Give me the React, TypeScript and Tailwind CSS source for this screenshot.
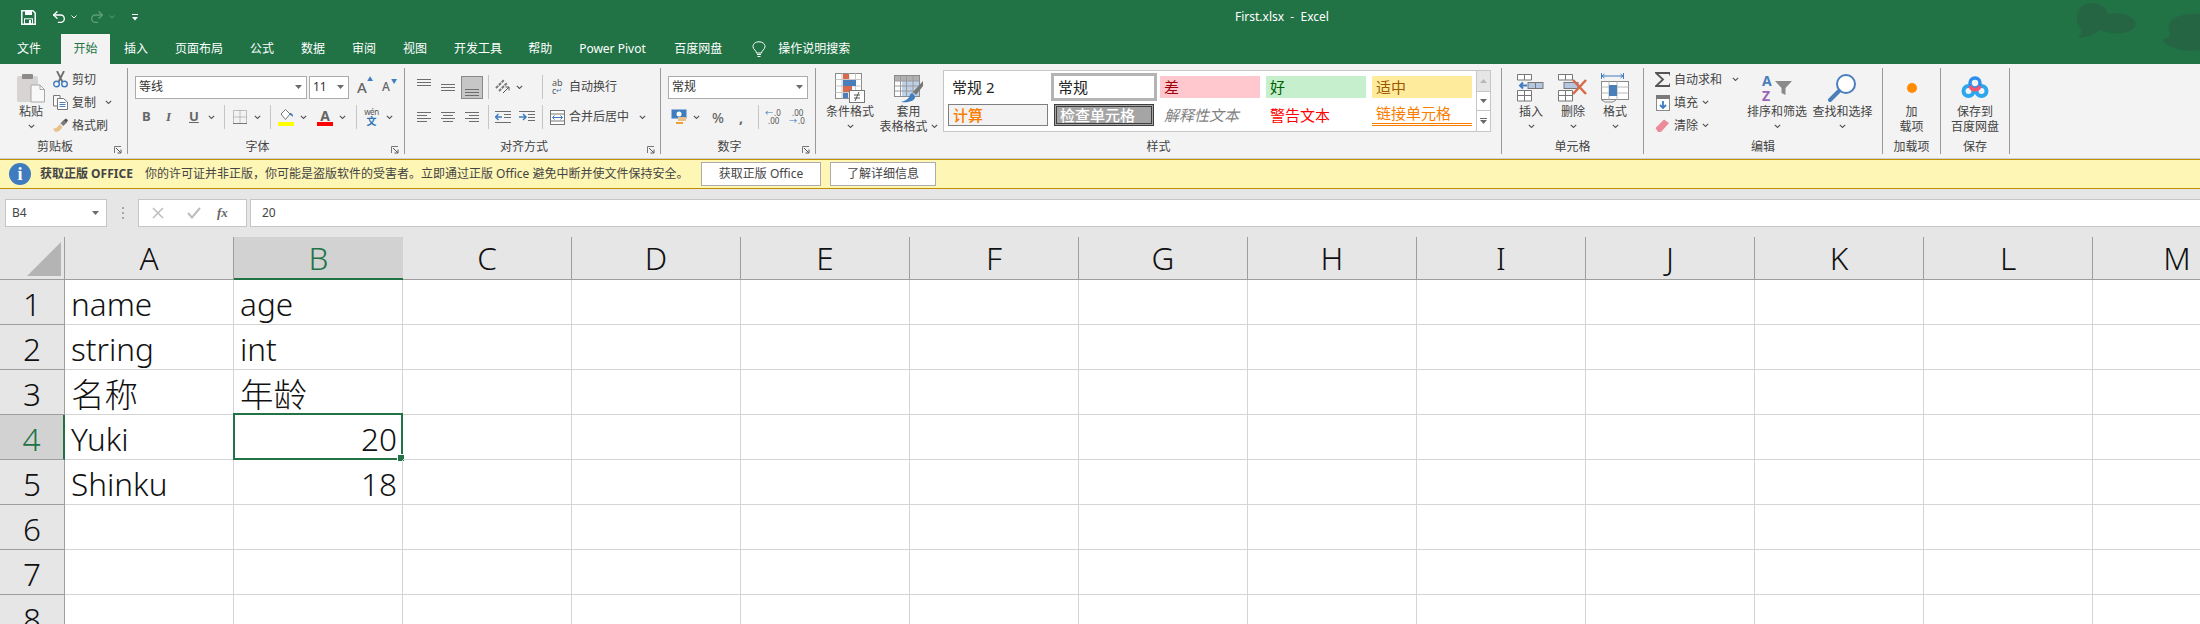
import React from "react";
import { Undo2, Redo2 } from "lucide-react";

const Chev = ({ className = "" }: { className?: string }) => (
  <svg width="7" height="5" viewBox="0 0 7 5" className={"shrink-0 " + className}>
    <path d="M0.8 0.8L3.5 3.5L6.2 0.8" stroke="#555" strokeWidth="1.1" fill="none" />
  </svg>
);
const Tri = ({ className = "" }: { className?: string }) => (
  <svg width="7" height="4" viewBox="0 0 7 4" className={"shrink-0 " + className}>
    <path d="M0 0H7L3.5 4Z" fill="#6a6a6a" />
  </svg>
);
const Sep = ({ className = "" }: { className?: string }) => <div className={"w-px h-[24px] bg-[#c6c6c6] shrink-0 " + className} />;

const Lines = ({ d, className = "" }: { d: string; className?: string }) => (
  <svg width="14" height="20" viewBox="0 0 14 20" className={"shrink-0 " + className}>
    <path d={d} stroke="#6d6d6d" strokeWidth="1" fill="none" />
  </svg>
);

const Launcher = () => (
  <svg width="8" height="8" viewBox="0 0 8 8" className="shrink-0">
    <path d="M0.5 7V0.5H7" stroke="#777" fill="none" />
    <path d="M2 2L6.5 6.5M7 3.5V7H3.5" stroke="#555" fill="none" />
  </svg>
);

function Group({ w, label, launcher, children }: { w: string; label: string; launcher?: boolean; children: React.ReactNode }) {
  return (
    <div className={"h-[86px] flex flex-col shrink-0 border-r border-[#9a9a9a] " + w}>
      <div className="h-[70px] flex">{children}</div>
      <div className="h-[16px] flex items-end">
        <div className="flex-1 text-center leading-[15px] text-[12px] text-[#444]">{label}</div>
        {launcher && <div className="w-[17px] h-[8px] pl-[4px] flex"><Launcher /></div>}
      </div>
    </div>
  );
}

function Large({ w, icon, lines, chev = true }: { w: string; icon: React.ReactNode; lines: React.ReactNode[]; chev?: boolean }) {
  return (
    <div className={"flex flex-col items-center shrink-0 pt-[4px] text-[12px] leading-[15px] text-[#444] " + w}>
      <div className="h-[32px] flex items-center justify-center">{icon}</div>
      {lines.map((l, i) => (
        <div key={i} className="h-[15px] whitespace-nowrap flex items-center">{l}</div>
      ))}
      {chev && <div className="h-[15px] flex items-center"><Chev /></div>}
    </div>
  );
}

const PasteIcon = () => (
  <svg width="28" height="30" viewBox="0 0 28 30">
    <rect x="0" y="3" width="21" height="26" rx="2" fill="#d8d4d4" />
    <rect x="5" y="1" width="11" height="5" rx="1" fill="#8e8a8a" />
    <path d="M14 12H23L27.500 16.500V29H14Z" fill="#f8f8f8" stroke="#a8a8a8" />
    <path d="M23 12V16.500H27.500" fill="none" stroke="#a8a8a8" />
  </svg>
);
const CutIcon = () => (
  <svg width="15" height="17" viewBox="0 0 15 17">
    <path d="M4 0L9.500 11M11 0L5.500 11" stroke="#6d6d6d" strokeWidth="1.800" />
    <circle cx="3.500" cy="13" r="2.800" fill="none" stroke="#3f7cc0" strokeWidth="1.400" />
    <circle cx="11.500" cy="13" r="2.800" fill="none" stroke="#3f7cc0" strokeWidth="1.400" />
  </svg>
);
const CopyIcon = () => (
  <svg width="15" height="15" viewBox="0 0 15 15">
    <path d="M0.500 0.500H7V3M0.500 0.500V11H4" fill="#fff" stroke="#777" />
    <path d="M4.500 3.500H10.500L14.500 7V14.500H4.500Z" fill="#fff" stroke="#777" />
    <path d="M6.500 7.500H12.500M6.500 9.500H12.500M6.500 11.500H12.500" stroke="#4a7ebb" />
  </svg>
);
const BrushIcon = () => (
  <svg width="16" height="15" viewBox="0 0 16 15">
    <path d="M0 11C4 11 6 8 7 6L10 9C9 12 5 15 2 14Z" fill="#e8c08a" />
    <path d="M8 5L11 2L14 5L11 8Z" fill="#7a7a7a" />
    <path d="M11 2L14 0L16 2L14 5Z" fill="#555" />
  </svg>
);
const BorderIcon = () => (
  <svg width="14" height="14" viewBox="0 0 14 14">
    <path d="M0.500 0.500H13.500V13.500H0.500ZM7 0.500V13.500M0.500 7H13.500" stroke="#8a8a8a" strokeDasharray="1 1" fill="none" />
    <path d="M0 13.500H14" stroke="#777" />
  </svg>
);
const FillIcon = () => (
  <div className="w-[16px] flex flex-col items-center shrink-0">
    <svg width="16" height="13" viewBox="0 0 16 13">
      <path d="M3 5L7.500 0.500L12 5L7.500 10.500Z" fill="#fff" stroke="#777" />
      <path d="M12 4C14 4 15.500 6 15 8C14 7 13 6 12 6Z" fill="#3f7cc0" />
    </svg>
    <div className="w-[16px] h-[4px] bg-[#ffff00]" />
  </div>
);
const FontColorIcon = () => (
  <div className="w-[16px] flex flex-col items-center shrink-0">
    <span className="text-[14px] leading-[13px] h-[13px] font-bold text-[#666]">A</span>
    <div className="w-[16px] h-[4px] bg-[#ff0000]" />
  </div>
);
const WenIcon = () => (
  <div className="w-[15px] flex flex-col items-center shrink-0 leading-none">
    <span className="text-[8px] leading-[9px] text-[#555] tracking-tighter">wén</span>
    <span className="text-[10px] leading-[11px] text-[#2f75b5] font-bold">文</span>
  </div>
);
const OrientIcon = () => (
  <div className="w-[16px] h-[16px] flex items-center justify-center shrink-0">
    <svg width="16" height="16" viewBox="0 0 16 16">
      <path d="M1 9L9 1M4 12L12 4" stroke="#777" strokeWidth="2" strokeDasharray="3 1" />
      <path d="M8 14L14 8M14 8V11.500M14 8H10.500" stroke="#555" fill="none" />
    </svg>
  </div>
);
const IndentIcon = ({ flip }: { flip?: boolean }) => (
  <svg width="16" height="12" viewBox="0 0 16 12" className="shrink-0">
    {flip ? (
      <>
        <path d="M0 6H7M4 3L7 6L4 9" stroke="#3f7cc0" strokeWidth="1.500" fill="none" />
        <path d="M0 0.500H16M9 3.500H16M9 6.500H16M9 9.500H16" stroke="#6d6d6d" />
      </>
    ) : (
      <>
        <path d="M7 6H0.500M3.500 3L0.500 6L3.500 9" stroke="#3f7cc0" strokeWidth="1.500" fill="none" />
        <path d="M0 0.500H16M9 3.500H16M9 6.500H16M0 11.500H16" stroke="#6d6d6d" />
      </>
    )}
  </svg>
);
const WrapIcon = () => (
  <div className="w-[11px] flex flex-col shrink-0 leading-[8px] text-[9px] text-[#555]">
    <span>ab</span>
    <span className="flex items-center">c<span className="text-[#3f7cc0] text-[7px]">↵</span></span>
  </div>
);
const MergeIcon = () => (
  <svg width="15" height="15" viewBox="0 0 15 15" className="shrink-0">
    <rect x="0.500" y="0.500" width="14" height="14" fill="#fff" stroke="#777" />
    <path d="M0.500 4H14.500M0.500 11H14.500" stroke="#777" />
    <path d="M2.500 7.500H12.500M4.500 5.500L2.500 7.500L4.500 9.500M10.500 5.500L12.500 7.500L10.500 9.500" stroke="#3f7cc0" fill="none" />
  </svg>
);
const CurrencyIcon = () => (
  <svg width="17" height="16" viewBox="0 0 17 16" className="shrink-0">
    <rect x="0.500" y="0.500" width="15" height="9" fill="#3f7cc0" />
    <circle cx="8" cy="5" r="2.500" fill="#fff" />
    <path d="M7 9H15M7 11H15" stroke="#e8c08a" strokeWidth="2" />
    <path d="M5 14H12" stroke="#f0a030" strokeWidth="2" />
  </svg>
);
const DecIcon = ({ more }: { more?: boolean }) => (
  <div className="w-[14px] shrink-0 flex flex-col text-[8px] leading-[8px] text-[#555]">
    {more ? (
      <>
        <span className="flex items-center"><span className="text-[#3f7cc0] mr-px">←</span>.0</span>
        <span className="pl-[3px]">.00</span>
      </>
    ) : (
      <>
        <span className="pl-[3px]">.00</span>
        <span className="flex items-center"><span className="text-[#3f7cc0] mr-px">→</span>.0</span>
      </>
    )}
  </div>
);
const CondIcon = () => (
  <svg width="30" height="30" viewBox="0 0 30 30">
    <rect x="0.500" y="0.500" width="26" height="25" fill="#fff" stroke="#8a8a8a" />
    <path d="M7 0.500V25.500M14 0.500V25.500M20.500 0.500V25.500M0.500 6.500H26.500M0.500 13H26.500M0.500 19.500H26.500" stroke="#c8c8c8" />
    <rect x="8" y="1" width="6" height="5" fill="#d9694a" />
    <rect x="8" y="7" width="13" height="6" fill="#4a7ebb" />
    <rect x="8" y="13" width="9" height="6" fill="#d9694a" />
    <rect x="8" y="20" width="5" height="5" fill="#4a7ebb" />
    <rect x="14.500" y="17.500" width="15" height="12" fill="#fff" stroke="#777" />
    <path d="M19 22H25M19 25H25M20 28L24 19" stroke="#555" fill="none" />
  </svg>
);
const TableIcon = () => (
  <svg width="30" height="30" viewBox="0 0 30 30">
    <rect x="0.500" y="2.500" width="25" height="21" fill="#fff" stroke="#8a8a8a" />
    <rect x="1" y="3" width="24" height="5" fill="#b0b0b0" />
    <rect x="8" y="8" width="17" height="15" fill="#bcd0e8" />
    <path d="M6.500 2.500V23.500M12.500 2.500V23.500M19 2.500V23.500M0.500 8H25.500M0.500 13H25.500M0.500 18H25.500" stroke="#9a9a9a" />
    <path d="M29 8L19 19L22 22L29 13Z" fill="#777" />
    <path d="M18 20C14 22 18 26 7 29C14 30 22 28 21 23Z" fill="#3f7cc0" />
  </svg>
);
const InsertIcon = () => (
  <svg width="28" height="28" viewBox="0 0 28 28">
    <path d="M0.500 0.500H14.500V6H0.500ZM7.500 0.500V6M0.500 16.500H14.500V27H0.500ZM7.500 16.500V27M0.500 21.500H14.500" fill="#fff" stroke="#777" />
    <rect x="11" y="8.500" width="15" height="6" fill="#b4c7e0" stroke="#777" />
    <path d="M18.500 8.500V14.500" stroke="#777" />
    <path d="M10 11.500H3M6 8.500L3 11.500L6 14.500" stroke="#3f7cc0" strokeWidth="2" fill="none" />
  </svg>
);
const DeleteIcon = () => (
  <svg width="30" height="28" viewBox="0 0 30 28">
    <path d="M0.500 0.500H14.500V6H0.500ZM7.500 0.500V6M0.500 16.500H14.500V27H0.500ZM7.500 16.500V27M0.500 21.500H14.500" fill="#fff" stroke="#777" />
    <rect x="6" y="8.500" width="14" height="6" fill="#b4c7e0" stroke="#777" />
    <path d="M15 6L28 20M28 6L15 20" stroke="#d9694a" strokeWidth="2.500" />
  </svg>
);
const FormatIcon = () => (
  <svg width="28" height="30" viewBox="0 0 28 30">
    <path d="M1 3H22M1 3L3.500 1M1 3L3.500 5M22 3L19.500 1M22 3L19.500 5M0.500 0V6M22.500 0V6" stroke="#3f7cc0" fill="none" />
    <rect x="0.500" y="8.500" width="27" height="18" fill="#fff" stroke="#8a8a8a" />
    <path d="M8 8.500V26.500M16 8.500V26.500M0.500 14H27.500M0.500 20H27.500" stroke="#b8b8b8" />
    <rect x="8" y="12" width="8" height="11" fill="#4a7ebb" />
    <path d="M0.500 27L4 29H12L15 27" fill="none" stroke="#8a8a8a" />
  </svg>
);
const SumIcon = () => (
  <svg width="15" height="15" viewBox="0 0 15 15" className="shrink-0">
    <path d="M15 3.500V1H1L8 7.500L1 14H15V11.500" fill="none" stroke="#555" strokeWidth="1.800" />
  </svg>
);
const DownFill = () => (
  <svg width="14" height="16" viewBox="0 0 14 16" className="shrink-0">
    <rect x="0.500" y="0.500" width="13" height="15" fill="#fff" stroke="#8a8a8a" />
    <rect x="0" y="0" width="14" height="4" fill="#7a7a7a" />
    <path d="M7 6V13M4 10L7 13L10 10" stroke="#3f7cc0" strokeWidth="1.800" fill="none" />
  </svg>
);
const Eraser = () => (
  <svg width="15" height="14" viewBox="0 0 15 14" className="shrink-0">
    <path d="M0.500 9L9 0.500L14 4L6 13H3Z" fill="#ea8a9a" />
  </svg>
);
const SortIcon = () => (
  <div className="flex items-center w-[30px]">
    <div className="flex flex-col gap-[2px] text-[14px] leading-[13px] font-bold w-[13px]">
      <span className="text-[#4a7ebb]">A</span>
      <span className="text-[#9a62b5]">Z</span>
    </div>
    <svg width="17" height="17" viewBox="0 0 17 17">
      <path d="M0 1H17L10.500 8V15L6.500 13V8Z" fill="#8a8a8a" />
    </svg>
  </div>
);
const SearchIcon = () => (
  <svg width="29" height="30" viewBox="0 0 29 30">
    <circle cx="18" cy="11" r="9" fill="#fff" stroke="#4a7ebb" strokeWidth="2" />
    <path d="M11 18L2 27" stroke="#4a7ebb" strokeWidth="4" strokeLinecap="round" />
  </svg>
);
const CloudIcon = () => (
  <svg width="28" height="24" viewBox="0 0 28 24">
    <circle cx="7.500" cy="15" r="5" fill="none" stroke="#2ba7ef" strokeWidth="4" />
    <circle cx="20.500" cy="15" r="5" fill="none" stroke="#2ba7ef" strokeWidth="4" />
    <circle cx="14" cy="7" r="5" fill="none" stroke="#2b8ff0" strokeWidth="3.500" />
    <path d="M9 10C11 15 17 15 19 10" fill="none" stroke="#f4546f" strokeWidth="3.500" />
  </svg>
);

const rowItem = "h-[23px] flex items-center text-[12px] text-[#444] whitespace-nowrap";
const row30 = "h-[30px] flex items-center text-[12px] text-[#444] whitespace-nowrap";
const selectBox = "h-[23px] bg-white border border-[#ababab] flex items-center shrink-0";

function Ribbon() {
  return (
    <div className="h-[95px] bg-[#f3f3f3] border-b border-[#d0d0d0] pt-[4px] flex">
      <Group w="w-[128px]" label="剪贴板" launcher>
        <div className="ml-[17px] w-[28px] shrink-0">
          <Large w="w-[28px]" icon={<PasteIcon />} lines={["粘贴"]} />
        </div>
        <div className="ml-[8px] flex flex-col w-[70px]">
          <div className={rowItem}><div className="w-[15px] flex justify-center"><CutIcon /></div><span className="ml-[4px]">剪切</span></div>
          <div className={rowItem}><div className="w-[15px] flex justify-center"><CopyIcon /></div><span className="ml-[4px]">复制</span><Chev className="ml-[9px]" /></div>
          <div className={rowItem}><div className="w-[15px] flex justify-center"><BrushIcon /></div><span className="ml-[4px]">格式刷</span></div>
        </div>
      </Group>
      <Group w="w-[277px]" label="字体" launcher>
        <div className="pt-[4px] flex flex-col">
          <div className={row30}>
            <div className={selectBox + " ml-[7px] w-[172px] pl-[3px] pr-[4px] justify-between text-[#333]"}>等线<Tri /></div>
            <div className={selectBox + " ml-[2px] w-[40px] pl-[3px] pr-[4px] justify-between text-[#333]"}>11<Tri /></div>
            <div className="ml-[8px] w-[13px] text-[15px] font-medium text-[#666] relative">A<span className="absolute right-[-3px] top-0 text-[6px] leading-none text-[#3f7cc0]">▲</span></div>
            <div className="ml-[12px] w-[12px] text-[12px] font-medium text-[#666] relative">A<span className="absolute right-[-3px] top-0 text-[6px] leading-none text-[#3f7cc0]">▼</span></div>
          </div>
          <div className={row30}>
            <span className="ml-[14px] w-[8px] font-bold text-[13px] text-[#666]">B</span>
            <span className="ml-[16px] w-[8px] italic text-[13px] text-[#666] font-['Liberation_Serif',serif] font-bold">I</span>
            <span className="ml-[15px] w-[9px] underline font-bold text-[13px] text-[#666]">U</span>
            <Chev className="ml-[10px]" />
            <Sep className="ml-[9px]" />
            <div className="ml-[8px]"><BorderIcon /></div>
            <Chev className="ml-[7px]" />
            <Sep className="ml-[9px]" />
            <div className="ml-[7px]"><FillIcon /></div>
            <Chev className="ml-[6px]" />
            <div className="ml-[10px]"><FontColorIcon /></div>
            <Chev className="ml-[6px]" />
            <Sep className="ml-[10px]" />
            <div className="ml-[7px]"><WenIcon /></div>
            <Chev className="ml-[7px]" />
          </div>
        </div>
      </Group>
      <Group w="w-[256px]" label="对齐方式" launcher>
        <div className="pt-[4px] flex flex-col">
          <div className={row30}>
            <Lines className="ml-[12px]" d="M0 2.500H14M0 5.500H14M0 8.500H14" />
            <Lines className="ml-[10px]" d="M0 7.500H14M0 10.500H14M0 13.500H14" />
            <div className="ml-[6px] w-[22px] h-[23px] bg-[#c6c6c6] border border-[#8a8a8a] flex items-center justify-center shrink-0">
              <Lines d="M0 12.500H14M0 15.500H14M0 18.500H14" />
            </div>
            <Sep className="ml-[5px]" />
            <div className="ml-[6px]"><OrientIcon /></div>
            <Chev className="ml-[5px]" />
            <Sep className="ml-[19px]" />
            <div className="ml-[9px]"><WrapIcon /></div>
            <span className="ml-[6px]">自动换行</span>
          </div>
          <div className={row30}>
            <Lines className="ml-[12px]" d="M0 5.500H14M0 8.500H10M0 11.500H14M0 14.500H10" />
            <Lines className="ml-[10px]" d="M0 5.500H14M2 8.500H12M0 11.500H14M2 14.500H12" />
            <Lines className="ml-[10px]" d="M0 5.500H14M4 8.500H14M0 11.500H14M4 14.500H14" />
            <Sep className="ml-[9px]" />
            <div className="ml-[6px]"><IndentIcon /></div>
            <div className="ml-[8px]"><IndentIcon flip /></div>
            <Sep className="ml-[7px]" />
            <div className="ml-[7px]"><MergeIcon /></div>
            <span className="ml-[4px]">合并后居中</span>
            <Chev className="ml-[10px]" />
          </div>
        </div>
      </Group>
      <Group w="w-[155px]" label="数字" launcher>
        <div className="pt-[4px] flex flex-col">
          <div className={row30}>
            <div className={selectBox + " ml-[7px] w-[140px] pl-[3px] pr-[4px] justify-between text-[#333]"}>常规<Tri /></div>
          </div>
          <div className={row30}>
            <div className="ml-[10px]"><CurrencyIcon /></div>
            <Chev className="ml-[5px]" />
            <span className="ml-[12px] w-[13px] text-[14px] text-[#666] font-medium">%</span>
            <span className="ml-[14px] w-[5px] text-[14px] font-bold text-[#666]">,</span>
            <Sep className="ml-[14px]" />
            <div className="ml-[6px]"><DecIcon more /></div>
            <div className="ml-[10px]"><DecIcon /></div>
          </div>
        </div>
      </Group>
      <Group w="w-[686px]" label="样式">
        <div className="ml-[10px]"><Large w="w-[48px]" icon={<CondIcon />} lines={["条件格式"]} /></div>
        <div className="ml-[5px]">
          <Large w="w-[59px]" chev={false} icon={<TableIcon />} lines={["套用", <span className="flex items-center">表格格式<Chev className="ml-[3px]" /></span>]} />
        </div>
        <div className="ml-[5px] mt-[2px] w-[548px] h-[62px] bg-white border border-[#c6c6c6] flex shrink-0">
          <div className="flex-1 grid grid-cols-[repeat(5,100px)] grid-rows-[22px_22px] gap-x-[6px] gap-y-[6px] pl-[4px] pt-[5px] text-[15px] leading-[22px] whitespace-nowrap">
            <div className="px-[4px] text-[#222]">常规 2</div>
            <div className="px-[4px] text-[#222] outline-3 outline-[#b4b4b4]">常规</div>
            <div className="px-[4px] bg-[#ffc7ce] text-[#9c0006]">差</div>
            <div className="px-[4px] bg-[#c6efce] text-[#006100]">好</div>
            <div className="px-[4px] bg-[#ffeb9c] text-[#9c5700]">适中</div>
            <div className="px-[4px] bg-[#f2f2f2] border border-[#7f7f7f] text-[#fa7d00] font-medium leading-[20px]">计算</div>
            <div className="px-[3px] bg-[#a5a5a5] border-[3px] border-double border-[#3f3f3f] text-white font-medium leading-[16px]">检查单元格</div>
            <div className="px-[4px] italic text-[#7f7f7f]">解释性文本</div>
            <div className="px-[4px] text-[#ff0000]">警告文本</div>
            <div className="px-[4px] text-[#fa7d00] border-b-[3px] border-double border-[#fa7d00] leading-[19px]">链接单元格</div>
          </div>
          <div className="w-[14px] border-l border-[#c6c6c6] flex flex-col">
            <div className="h-[21px] bg-[#e6e6e6] border-b border-[#c6c6c6] flex items-center justify-center"><svg width="7" height="4" viewBox="0 0 7 4"><path d="M0 4H7L3.500 0Z" fill="#b8b8b8" /></svg></div>
            <div className="h-[19px] border-b border-[#c6c6c6] flex items-center justify-center"><Tri /></div>
            <div className="flex-1 flex flex-col items-center justify-center gap-[1px]"><div className="w-[7px] h-px bg-[#6a6a6a]" /><Tri /></div>
          </div>
        </div>
      </Group>
      <Group w="w-[142px]" label="单元格">
        <div className="ml-[8px]"><Large w="w-[42px]" icon={<InsertIcon />} lines={["插入"]} /></div>
        <Large w="w-[42px]" icon={<DeleteIcon />} lines={["删除"]} />
        <Large w="w-[42px]" icon={<FormatIcon />} lines={["格式"]} />
      </Group>
      <Group w="w-[239px]" label="编辑">
        <div className="ml-[11px] w-[92px] flex flex-col shrink-0">
          <div className={rowItem}><div className="w-[15px] flex justify-center"><SumIcon /></div><span className="ml-[4px]">自动求和</span><Chev className="ml-[10px]" /></div>
          <div className={rowItem}><div className="w-[15px] flex justify-center"><DownFill /></div><span className="ml-[4px]">填充</span><Chev className="ml-[4px]" /></div>
          <div className={rowItem}><div className="w-[15px] flex justify-center"><Eraser /></div><span className="ml-[4px]">清除</span><Chev className="ml-[4px]" /></div>
        </div>
        <Large w="w-[60px]" icon={<SortIcon />} lines={["排序和筛选"]} />
        <div className="ml-[5px]"><Large w="w-[61px]" icon={<SearchIcon />} lines={["查找和选择"]} /></div>
      </Group>
      <Group w="w-[58px]" label="加载项">
        <Large w="w-[57px]" chev={false} icon={<div className="w-[10px] h-[10px] rounded-full bg-[#ff8c00] blur-[0.5px]" />} lines={["加", "载项"]} />
      </Group>
      <Group w="w-[69px]" label="保存">
        <Large w="w-[68px]" chev={false} icon={<CloudIcon />} lines={["保存到", "百度网盘"]} />
      </Group>
    </div>
  );
}

function TitleBar() {
  return (
    <div className="bg-[#217346] h-[64px] text-white relative overflow-hidden">
      <svg width="130" height="64" viewBox="0 0 130 64" className="absolute right-0 top-0">
        <path d="M9 10C14 0 34 0 38 14C48 12 64 14 66 24C64 34 44 36 30 30C22 36 14 38 8 38C12 34 12 32 10 28C6 22 6 16 9 10Z" fill="#266543" />
        <path d="M100 22C108 12 130 14 130 14V50C118 52 100 50 92 40C98 38 100 36 100 34C98 30 98 26 100 22Z" fill="#266543" />
      </svg>
      <div className="h-[34px] flex items-center">
        <svg width="15" height="15" viewBox="0 0 15 15" className="ml-[21px] shrink-0">
          <path d="M0.800 0.800H12L14.200 3V14.200H0.800Z" fill="none" stroke="#fff" strokeWidth="1.500" />
          <rect x="4" y="1" width="7" height="4" fill="#fff" />
          <rect x="3.500" y="8.800" width="8" height="5" fill="none" stroke="#fff" />
          <rect x="8" y="10" width="2" height="4" fill="#fff" />
        </svg>
        <Undo2 size={16} strokeWidth={2} color="#fff" className="ml-[15px] shrink-0" />
        <svg width="6" height="4" viewBox="0 0 6 4" className="ml-[4px] shrink-0"><path d="M0.500 0.500L3 3L5.500 0.500" stroke="#fff" fill="none" /></svg>
        <Redo2 size={16} strokeWidth={2} color="#5f9e7c" className="ml-[12px] shrink-0" />
        <svg width="6" height="4" viewBox="0 0 6 4" className="ml-[4px] shrink-0"><path d="M0.500 0.500L3 3L5.500 0.500" stroke="#5f9e7c" fill="none" /></svg>
        <svg width="6" height="7" viewBox="0 0 6 7" className="ml-[17px] shrink-0"><path d="M0 0.500H6" stroke="#fff" /><path d="M0 3H6L3 6.500Z" fill="#fff" /></svg>
        <span className="ml-[1097px] text-[12px] whitespace-pre">First.xlsx  -  Excel</span>
      </div>
      <div className="h-[30px] flex items-center text-[12px] whitespace-nowrap">
        <span className="ml-[17px]">文件</span>
        <div className="ml-[20px] w-[49px] h-[30px] bg-[#f3f3f3] text-[#217346] flex items-center justify-center">开始</div>
        <span className="ml-[14px]">插入</span>
        <span className="ml-[27px]">页面布局</span>
        <span className="ml-[27px]">公式</span>
        <span className="ml-[27px]">数据</span>
        <span className="ml-[27px]">审阅</span>
        <span className="ml-[27px]">视图</span>
        <span className="ml-[27px]">开发工具</span>
        <span className="ml-[26px]">帮助</span>
        <span className="ml-[27px] w-[68px]">Power Pivot</span>
        <span className="ml-[27px]">百度网盘</span>
        <svg width="14" height="17" viewBox="0 0 14 17" className="ml-[30px] shrink-0">
          <path d="M4.500 12C4.500 9.500 1 8.500 1 5.500C1 2.800 3.500 0.800 7 0.800C10.500 0.800 13 2.800 13 5.500C13 8.500 9.500 9.500 9.500 12Z" fill="none" stroke="#fff" />
          <path d="M5 13.500H9M5.500 15.500H8.500" stroke="#fff" />
        </svg>
        <span className="ml-[12px]">操作说明搜索</span>
      </div>
    </div>
  );
}

function Notice() {
  return (
    <div className="h-[30px] bg-[#fdf6b5] border-y border-[#bf8f00] flex items-center text-[12px] text-[#444] whitespace-nowrap">
      <div className="ml-[9px] w-[22px] h-[22px] rounded-full bg-[#3f7cbf] text-white flex items-center justify-center font-['Liberation_Serif',serif] font-bold text-[18px] leading-none shrink-0">i</div>
      <span className="ml-[9px] w-[96px] font-bold">获取正版 OFFICE</span>
      <span className="ml-[9px] w-[556px]">你的许可证并非正版，你可能是盗版软件的受害者。立即通过正版 Office 避免中断并使文件保持安全。</span>
      <button className="w-[120px] h-[24px] bg-white border border-[#ababab] text-[#444] shrink-0">获取正版 Office</button>
      <button className="ml-[9px] w-[106px] h-[24px] bg-white border border-[#ababab] text-[#444] shrink-0">了解详细信息</button>
    </div>
  );
}

function FormulaBar() {
  return (
    <div className="h-[48px] bg-[#e6e6e6] pt-[10px] flex items-start text-[12px] text-[#444]">
      <div className="ml-[5px] w-[102px] h-[28px] bg-white border border-[#c6c6c6] flex items-center justify-between pl-[6px] pr-[7px] shrink-0">B4<Tri /></div>
      <div className="ml-[14px] w-[4px] h-[28px] flex flex-col justify-center items-center gap-[3px] shrink-0">
        <div className="w-[2px] h-[2px] bg-[#a6a6a6]" /><div className="w-[2px] h-[2px] bg-[#a6a6a6]" /><div className="w-[2px] h-[2px] bg-[#a6a6a6]" />
      </div>
      <div className="ml-[13px] w-[109px] h-[28px] bg-white border border-[#c6c6c6] flex items-center shrink-0">
        <svg width="12" height="12" viewBox="0 0 12 12" className="ml-[13px] shrink-0"><path d="M1 1L11 11M11 1L1 11" stroke="#bdbdbd" strokeWidth="1.500" /></svg>
        <svg width="14" height="12" viewBox="0 0 14 12" className="ml-[23px] shrink-0"><path d="M1 6L5 10.500L13 1" stroke="#bdbdbd" strokeWidth="2" fill="none" /></svg>
        <span className="ml-[16px] font-['Liberation_Serif',serif] italic font-bold text-[13px] text-[#666]">fx</span>
      </div>
      <div className="ml-[3px] flex-1 h-[28px] bg-white border border-[#c6c6c6] border-r-0 flex items-center pl-[11px]">20</div>
    </div>
  );
}

const COLS = ["A", "B", "C", "D", "E", "F", "G", "H", "I", "J", "K", "L", "M"];
const RIGHT = "justify-end pr-[5px]";
const DATA: Record<number, Record<string, string>> = {
  1: { A: "name", B: "age" },
  2: { A: "string", B: "int" },
  3: { A: "名称", B: "年龄" },
  4: { A: "Yuki", B: "20" },
  5: { A: "Shinku", B: "18" },
};

function Sheet() {
  return (
    <div className="text-[31.5px] text-[#111] font-light">
      <div className="flex h-[43px]">
        <div className="w-[65px] shrink-0 bg-[#e6e6e6] border-r border-b border-[#9e9e9e] flex items-end justify-end pr-[3px] pb-[3px]">
          <svg width="34" height="34" viewBox="0 0 34 34"><path d="M34 0V34H0Z" fill="#b4b4b4" /></svg>
        </div>
        {COLS.map((c) =>
          c === "B" ? (
            <div key={c} className="w-[169px] shrink-0 bg-[#d2d2d2] border-b-2 border-[#217346] text-[#217346] flex items-center justify-center leading-[42px]">{c}</div>
          ) : (
            <div key={c} className="w-[169px] shrink-0 bg-[#e6e6e6] border-r border-b border-[#9e9e9e] flex items-center justify-center leading-[42px]">{c}</div>
          )
        )}
      </div>
      {[1, 2, 3, 4, 5, 6, 7, 8].map((r) => (
        <div key={r} className="flex h-[45px]">
          {r === 4 ? (
            <div className="w-[65px] shrink-0 bg-[#d2d2d2] border-r-2 border-b border-b-[#9e9e9e] border-r-[#217346] text-[#217346] flex items-center justify-center pt-[4px] leading-[40px]">{r}</div>
          ) : (
            <div className="w-[65px] shrink-0 bg-[#e6e6e6] border-r border-b border-[#9e9e9e] flex items-center justify-center pt-[4px] leading-[40px]">{r}</div>
          )}
          {COLS.map((c) => {
            const v = DATA[r]?.[c];
            const num = v && /^\d+$/.test(v);
            const cjk = r === 3 && v;
            return (
              <div key={c} className={"w-[169px] shrink-0 border-r border-b border-[#d4d4d4] flex items-center relative pt-[4px] leading-[40px] whitespace-nowrap " + (num ? RIGHT : "pl-[6px]")}>
                {cjk ? <span className="text-[33.5px] leading-[38px] -mt-[1px]">{v}</span> : v}
                {r === 4 && c === "B" && (
                  <div className="absolute -left-px -top-[2px] right-[-1px] bottom-[-1px] border-2 border-[#217346]">
                    <div className="absolute right-[-4px] bottom-[-4px] w-[6px] h-[6px] bg-[#217346] border border-white box-content" />
                  </div>
                )}
              </div>
            );
          })}
        </div>
      ))}
    </div>
  );
}

export default function App() {
  return (
    <div className="w-[2200px] h-[624px] overflow-hidden bg-white font-['Noto_Sans','Noto_Sans_CJK_SC',sans-serif]">
      <TitleBar />
      <Ribbon />
      <Notice />
      <FormulaBar />
      <Sheet />
    </div>
  );
}
